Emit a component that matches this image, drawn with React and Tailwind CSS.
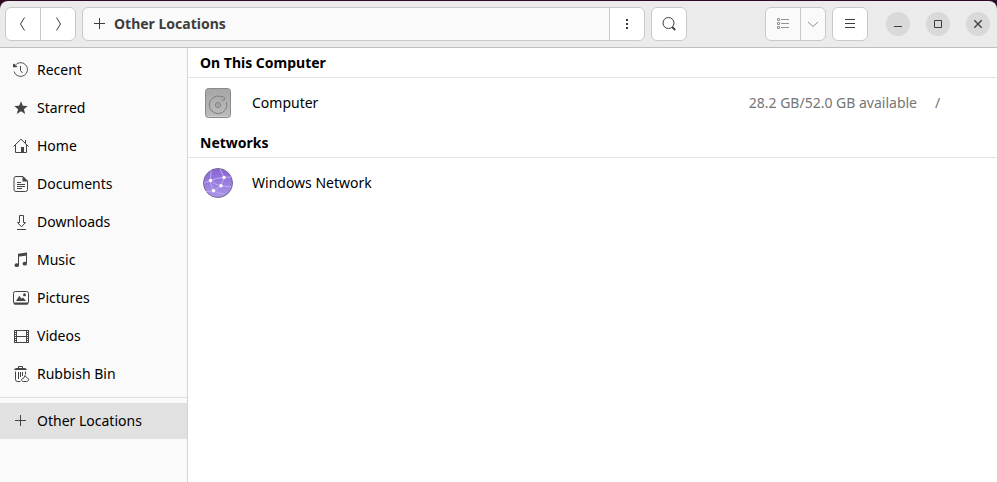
const Icon = ({ children, className = '' }) => (
  <svg
    viewBox="0 0 16 16"
    fill="none"
    stroke="currentColor"
    aria-hidden="true"
    className={`size-4 shrink-0 ${className}`}
  >
    {children}
  </svg>
);

const PlusIcon = ({ className }) => (
  <Icon className={className}>
    <path d="M2 7.5h11M7.5 2v11" />
  </Icon>
);

const RecentIcon = () => (
  <Icon>
    <path d="M1.8 3.8A6.9 6.9 0 1 1 1 9.500" strokeWidth=".9" />
    <path d="M0 2.200l1.300-.6 1 2 2 .3-.6 1.300H0z" fill="currentColor" stroke="none" />
    <path d="M7.5 4v4.5l2 2.500" />
  </Icon>
);

const StarIcon = () => (
  <Icon>
    <path
      d="M8 1.2l1.8 4.6 4.9.3-3.8 3.1 1.3 4.8L8 11.3 3.8 14l1.3-4.8L1.3 6.1l4.9-.3z"
      fill="currentColor"
      stroke="none"
    />
  </Icon>
);

const HomeIcon = () => (
  <Icon>
    <path d="M.5 8.5L8 1.2l7.5 7.3M12.5 2v3.4" />
    <path d="M2.5 7v7.5h11V7" />
    <path d="M8 9h3v5.5H8z" fill="currentColor" stroke="none" />
  </Icon>
);

const DocumentIcon = () => (
  <Icon>
    <path d="M3 .5h7l4.5 4.5v8.5a2 2 0 0 1-2 2H3a2 2 0 0 1-2-2v-11a2 2 0 0 1 2-2z" />
    <path d="M9.5 0v5.5H15z" fill="currentColor" stroke="none" />
    <path d="M4 6.5h4M4 8.5h8M4 10.5h8M4 12.5h5" />
  </Icon>
);

const DownloadIcon = () => (
  <Icon>
    <path d="M6.5 1.5h4v7h2l-4 4.3-4-4.3h2z" />
    <path d="M4 15.5h9" />
  </Icon>
);

const MusicIcon = () => (
  <Icon>
    <path d="M5 1.8L14 .5v3L5 4.7z" fill="currentColor" stroke="none" />
    <path d="M5.5 3v10M13.5 2v9" />
    <ellipse cx="3.8" cy="13.2" rx="2.2" ry="1.9" fill="currentColor" stroke="none" />
    <ellipse cx="11.8" cy="11.7" rx="2.2" ry="1.9" fill="currentColor" stroke="none" />
  </Icon>
);

const PictureIcon = () => (
  <Icon>
    <rect x=".5" y="1.5" width="15" height="12.5" rx="1.8" />
    <path d="M1 13.5h14" strokeWidth="2" />
    <path d="M3 11l3.3-5.2 2.2 3L10 7.5l3 3.5z" fill="currentColor" stroke="none" />
    <circle cx="11.5" cy="4.7" r="1.5" fill="currentColor" stroke="none" />
  </Icon>
);

const VideoIcon = () => (
  <Icon>
    <path d="M1.5 2v13M15.5 2v13" />
    <path d="M2.5 2v13M14.5 2v13" strokeDasharray="1 1" />
    <path d="M3.5 2v13M13.5 2v13M3.5 2.5h10M3.5 8.5h10M3.5 14.5h10" />
  </Icon>
);

const TrashIcon = () => (
  <Icon>
    <path d="M1 4Q1.500 2 3.500 2H5V.8Q5 0 6 0h3q1 0 1 .8V2h1.500q2 0 2.500 2z" fill="currentColor" stroke="none" />
    <path d="M6 1.500h3" stroke="#fafafa" />
    <path d="M2.500 5.500v8q0 2 2 2h3M12.500 5.500v3" />
    <path d="M5.500 6v7M7.500 6v5M9.500 6v4" />
    <path d="M12 9.500l1.500 2c1.800.6 2.500 1.800 1.800 3-.4.800-1 1-1.800 1h-3c-1.200 0-1.900-.7-1.900-1.600 0-1 .8-1.700 1.900-1.600z" />
  </Icon>
);

const DriveIcon = () => (
  <svg viewBox="0 0 32 32" className="size-8 shrink-0" fill="none" aria-hidden="true">
    <defs>
      <linearGradient id="drive" x1="0" y1="0" x2="0" y2="1">
        <stop offset="0" stopColor="#a6a6a6" />
        <stop offset="1" stopColor="#bdbdbd" />
      </linearGradient>
    </defs>
    <rect x="3.5" y="1.5" width="25" height="29" rx="3" fill="url(#drive)" stroke="#8a8a8a" />
    <path d="M6 29.5h20" stroke="#cfcfcf" />
    <path
      d="M24.5 15.300a8.800 8.800 0 1 1-6-5.900c2 .6 4.300 0 4.300 2.300 0 1.600-1.600 1.700-3.300 1.300"
      stroke="#7d7d7d"
    />
    <circle cx="16" cy="18" r="2.500" stroke="#7d7d7d" />
    <circle cx="16" cy="18" r=".7" fill="#7d7d7d" />
  </svg>
);

const NetworkIcon = () => (
  <svg viewBox="0 0 32 32" className="size-8 shrink-0" fill="none" aria-hidden="true">
    <defs>
      <linearGradient id="globe" x1="0" y1="0" x2="0" y2="1">
        <stop offset="0" stopColor="#8863d6" />
        <stop offset="1" stopColor="#ab98e8" />
      </linearGradient>
    </defs>
    <circle cx="16" cy="16" r="14.5" fill="url(#globe)" stroke="#77698f" />
    <g stroke="#c0adef">
      <path d="M8.5 13.5L9 3.5M8.5 13.5L2 16M8.500 13.500q7-3 13.500-3L29 10M22 10.500L18 2" />
      <path d="M8.500 13.500q4 4 10.500 5.300l3-8.300M8.500 13.500q0 6 3 10.300l7.500-5L29.500 20M11.500 23.800L4 24.500M11.500 23.800q6 3 10 3" />
    </g>
    <g fill="#fff">
      <circle cx="8.5" cy="13.5" r="1.7" />
      <circle cx="22" cy="10.5" r="1.7" />
      <circle cx="19" cy="18.8" r="1.7" />
      <circle cx="11.5" cy="23.8" r="1.7" />
    </g>
  </svg>
);

const places = [
  { name: 'Recent', icon: RecentIcon },
  { name: 'Starred', icon: StarIcon },
  { name: 'Home', icon: HomeIcon },
  { name: 'Documents', icon: DocumentIcon },
  { name: 'Downloads', icon: DownloadIcon },
  { name: 'Music', icon: MusicIcon },
  { name: 'Pictures', icon: PictureIcon },
  { name: 'Videos', icon: VideoIcon },
  { name: 'Rubbish Bin', icon: TrashIcon },
];

const sections = [
  {
    title: 'On This Computer',
    items: [{ name: 'Computer', icon: DriveIcon, usage: '28.2 GB/52.0 GB available', mount: '/' }],
  },
  {
    title: 'Networks',
    items: [{ name: 'Windows Network', icon: NetworkIcon }],
  },
];

const WindowButton = ({ label, children }) => (
  <button aria-label={label} className="flex size-6 items-center justify-center rounded-full bg-[#d9d9d9]">
    <Icon>{children}</Icon>
  </button>
);

const HeaderBar = () => (
  <header className="flex items-center gap-1.5 rounded-t-lg border-b border-[#bfbfbf] bg-[#ebebeb] pt-1.5 pr-[7px] pb-1.5 pl-[5px] text-[#3d3d3d]">
    <div className="flex divide-x divide-[#c9c9c9] rounded-md border border-[#c9c9c9] bg-white">
      <button aria-label="Back" className="flex h-8 w-[35px] items-center justify-center">
        <Icon>
          <path d="M9.5 1.500l-4 6.500 4 6.500" />
        </Icon>
      </button>
      <button aria-label="Forward" className="flex h-8 w-[34px] items-center justify-center">
        <Icon>
          <path d="M6.5 1.500l4 6.500-4 6.500" />
        </Icon>
      </button>
    </div>

    <div className="flex min-w-0 flex-1 divide-x divide-[#c9c9c9] rounded-md border border-[#c9c9c9] bg-[#fafafa]">
      <button className="flex h-8 min-w-0 flex-1 items-center gap-1.5 pl-[9px] font-bold">
        <PlusIcon />
        <span className="truncate">Other Locations</span>
      </button>
      <button aria-label="Location menu" className="flex h-8 w-[34px] items-center justify-center rounded-r-md bg-white">
        <Icon>
          <path d="M7 3h2v2H7zM7 7h2v2H7zM7 11h2v2H7z" fill="currentColor" stroke="none" />
        </Icon>
      </button>
    </div>

    <button
      aria-label="Search"
      className="mr-[72px] flex h-[34px] w-9 items-center justify-center rounded-md border border-[#c9c9c9] bg-white"
    >
      <Icon>
        <circle cx="7.5" cy="7" r="5.5" />
        <path d="M11.2 11l3 3" strokeWidth="1.8" />
      </Icon>
    </button>

    <div className="flex divide-x divide-[#c9c9c9] rounded-md border border-[#c9c9c9] bg-[#fafafa] text-[#929292]">
      <button aria-label="List view" className="flex h-8 w-[35px] items-center justify-center">
        <Icon>
          <path d="M2.5 2.5h2v2h-2zM2.5 6.5h2v2h-2zM2.5 10.5h2v2h-2zM6 3.5h8M6 7.5h8M6 11.5h8" />
        </Icon>
      </button>
      <button aria-label="View options" className="flex h-8 w-6 items-center justify-center">
        <Icon>
          <path d="M3 6l5 4.500L13 6" />
        </Icon>
      </button>
    </div>

    <button
      aria-label="Main menu"
      className="mr-3 flex h-[34px] w-9 items-center justify-center rounded-md border border-[#c9c9c9] bg-white"
    >
      <Icon>
        <path d="M3 3.5h10M3 7.5h10M3 11.5h10" />
      </Icon>
    </button>

    <div className="flex gap-4">
      <WindowButton label="Minimise">
        <path d="M4 10.5h8" />
      </WindowButton>
      <WindowButton label="Maximise">
        <path d="M4.5 4.5h7v7h-7z" />
      </WindowButton>
      <WindowButton label="Close">
        <path d="M4.3 4.3l7.4 7.4M11.7 4.3l-7.4 7.4" strokeWidth="1.3" />
      </WindowButton>
    </div>
  </header>
);

const Sidebar = () => (
  <nav className="w-[188px] shrink-0 border-r border-[#d5d5d5] bg-[#fafafa] pt-1">
    <ul className="flex flex-col gap-0.5">
      {places.map(({ name, icon: PlaceIcon }) => (
        <li key={name}>
          <a href="#" className="flex h-9 items-center gap-2 pl-[13px]">
            <span className="text-[#454545]">
              <PlaceIcon />
            </span>
            {name}
          </a>
        </li>
      ))}
    </ul>
    <hr className="my-[5px] border-[#dedede]" />
    <a href="#" aria-current="page" className="flex h-9 items-center gap-2 bg-[#e1e1e1] pl-[13px]">
      <PlusIcon className="text-[#454545]" />
      Other Locations
    </a>
  </nav>
);

const Section = ({ title, items }) => (
  <section>
    <h2 className="flex h-[30px] items-center border-b border-[#e2e2e2] pl-3 font-bold">{title}</h2>
    <ul>
      {items.map(({ name, icon: ItemIcon, usage, mount }) => (
        <li key={name} className="flex h-[50px] items-center pl-3.5">
          <ItemIcon />
          <span className="flex-1 pl-[18px]">{name}</span>
          {usage && <span className="text-[#757575]">{usage}</span>}
          {mount && <span className="w-20 pl-[18px] text-[#757575]">{mount}</span>}
        </li>
      ))}
    </ul>
  </section>
);

export default function App() {
  return (
    <div className="flex min-h-screen flex-col bg-[#300a24] pt-px font-['Noto_Sans','Open_Sans',sans-serif] text-sm text-black">
      <HeaderBar />
      <div className="flex flex-1">
        <Sidebar />
        <main className="flex-1 bg-white">
          {sections.map((section) => (
            <Section key={section.title} {...section} />
          ))}
        </main>
      </div>
    </div>
  );
}
